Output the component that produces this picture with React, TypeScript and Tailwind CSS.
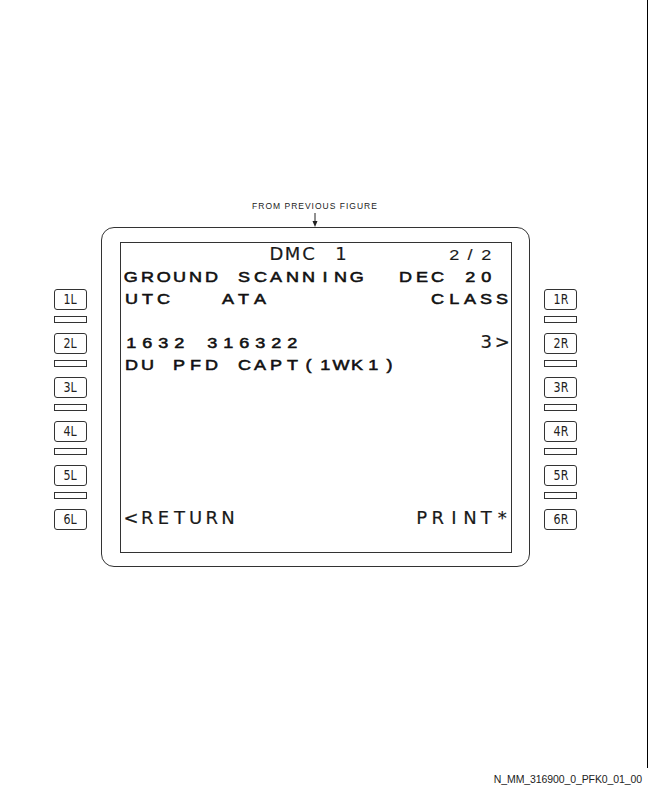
type Seg = { col: number; text: string; big?: boolean; thin?: boolean };

const COLS = 24;

// CDU page text, placed on a 24 column grid
const rows: Seg[][] = [
  [{ col: 9, text: "DMC 1", big: true }, { col: 20, text: "2/2", thin: true }],
  [{ col: 0, text: "GROUND SCANNING" }, { col: 17, text: "DEC 20" }],
  [{ col: 0, text: "UTC" }, { col: 6, text: "ATA" }, { col: 19, text: "CLASS" }],
  [],
  [{ col: 0, text: "1632 316322" }, { col: 22, text: "3>", big: true }],
  [{ col: 0, text: "DU PFD CAPT(1WK1)" }],
  [],
  [],
  [],
  [],
  [],
  [],
  [{ col: 0, text: "<RETURN", big: true }, { col: 18, text: "PRINT*", big: true }],
  [],
];

const bigCls =
  "inline-block text-[18px] leading-none text-[#1a1a1a] [-webkit-text-stroke:0.2px_#1a1a1a] [font-family:'DejaVu_Sans',sans-serif]";
const smallCls =
  "inline-block scale-x-[1.2] text-[15px] leading-none text-[#111] [-webkit-text-stroke:0.55px_#111] [font-family:'Liberation_Sans',Arial,sans-serif]";
const thinCls =
  "inline-block scale-x-[1.2] text-[15px] leading-none text-[#1a1a1a] [-webkit-text-stroke:0.15px_#1a1a1a] [font-family:'Liberation_Sans',Arial,sans-serif]";

function CduRow({ segs }: { segs: Seg[] }) {
  const cells: { ch: string; kind: "big" | "small" | "thin" }[] = Array.from({ length: COLS }, () => ({
    ch: " ",
    kind: "small" as const,
  }));
  segs.forEach((s) => {
    s.text.split("").forEach((ch, i) => {
      if (s.col + i < COLS) cells[s.col + i] = { ch, kind: s.big ? "big" : s.thin ? "thin" : "small" };
    });
  });
  return (
    <div className="flex h-[22px] items-center">
      {cells.map((c, i) => (
        <span key={i} className="flex w-[16.15px] shrink-0 justify-center">
          <span className={c.kind === "big" ? bigCls : c.kind === "thin" ? thinCls : smallCls}>
            {c.ch === " " ? "\u00a0" : c.ch}
          </span>
        </span>
      ))}
    </div>
  );
}

function LskColumn({ side }: { side: "L" | "R" }) {
  return (
    <div className="mt-[62px] flex w-[33px] shrink-0 flex-col">
      {[1, 2, 3, 4, 5, 6].map((n) => (
        <div key={n} className="flex flex-col">
          <div className="flex h-[21px] items-center justify-center rounded-[3px] border border-[#333]">
            <span className="inline-block scale-x-[0.82] text-[13.5px] leading-none text-[#222] [font-family:'DejaVu_Sans',sans-serif]">
              {n}
              {side}
            </span>
          </div>
          {n < 6 && <div className="mt-[6px] mb-[10px] h-[7px] border border-[#333]" />}
        </div>
      ))}
    </div>
  );
}

export default function App() {
  return (
    <div className="flex h-[792px] w-[648px] flex-col bg-white text-black [font-family:'Liberation_Sans',Arial,sans-serif]">
      <div className="flex h-[768px] flex-col border-r border-black pt-[201px]">
        {/* caption + arrow */}
        <div className="flex w-[630px] flex-col items-center">
          <div className="h-[10px] text-[8.5px] leading-[10px] tracking-[1px] text-[#222]">FROM PREVIOUS FIGURE</div>
          <svg width="8" height="16" viewBox="0 0 8 16" className="block">
            <line x1="4" y1="2" x2="4" y2="11" stroke="#222" strokeWidth="1" />
            <polygon points="1.5,10 6.5,10 4,16" fill="#222" />
          </svg>
        </div>

        <div className="flex items-start pl-[54px]">
          <LskColumn side="L" />

          {/* bezel */}
          <div className="ml-[14px] mr-[14px] flex h-[340px] w-[429px] shrink-0 flex-col rounded-[13px] border border-[#333] pl-[18px] pt-[14px]">
            <div className="flex h-[311px] w-[392px] flex-col overflow-hidden border border-[#333] pl-[2px]">
              {rows.map((r, i) => (
                <CduRow key={i} segs={r} />
              ))}
            </div>
          </div>

          <LskColumn side="R" />
        </div>
      </div>

      <div className="flex h-[24px] items-center justify-end pr-[6px] text-[10.5px] tracking-[-0.1px] text-[#222]">
        N_MM_316900_0_PFK0_01_00
      </div>
    </div>
  );
}
